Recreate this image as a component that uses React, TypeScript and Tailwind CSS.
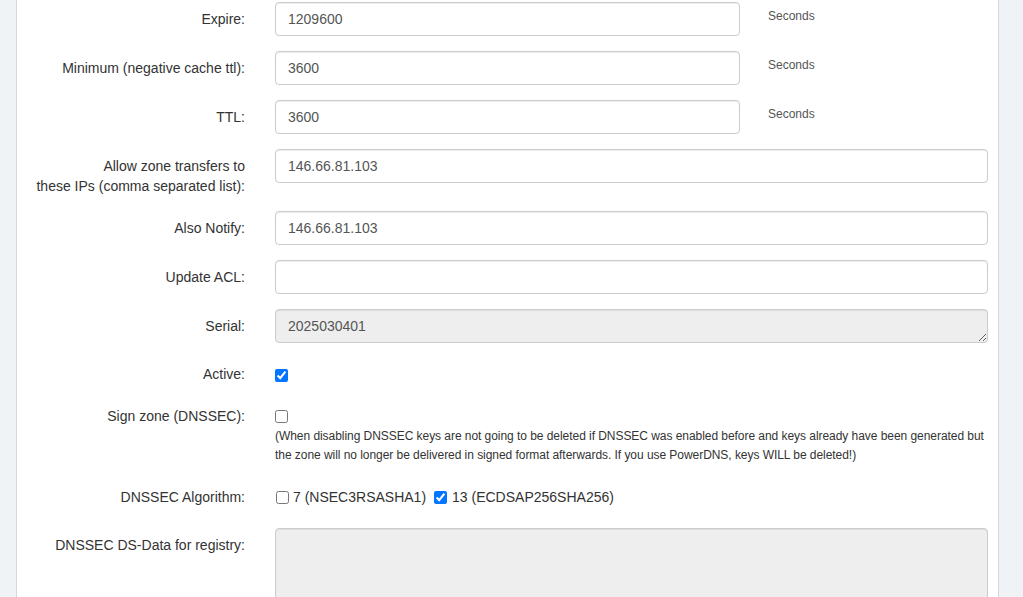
import React from "react";

const font = { fontFamily: '"Liberation Sans", Arial, sans-serif' };

const inputCls =
  "h-[34px] border border-[#ccc] rounded-[4px] bg-white px-3 text-[14px] text-[#555] outline-none shadow-[inset_0_1px_1px_rgba(0,0,0,0.075)]";

function Row({
  label,
  children,
  labelPad = "pt-[7px]",
}: {
  label: React.ReactNode;
  children: React.ReactNode;
  labelPad?: string;
}) {
  return (
    <div className="flex mb-[15px]">
      <label className={`w-[228px] shrink-0 text-right leading-5 text-[14px] text-[#333] ${labelPad}`}>
        {label}
      </label>
      <div className="ml-[30px] flex-1 min-w-0">{children}</div>
    </div>
  );
}

function SecondsRow({ label, value }: { label: string; value: string }) {
  return (
    <Row label={label}>
      <div className="flex">
        <input className={`${inputCls} w-[465px]`} defaultValue={value} />
        <span className="ml-[28px] pt-[4px] leading-5 text-[12px] text-[#555]">Seconds</span>
      </div>
    </Row>
  );
}

export default function App() {
  return (
    <div className="min-h-screen bg-[#eff3f6] pl-4 pr-6 overflow-hidden" style={font}>
      <div className="bg-white border-l border-r border-[#d2d6de] pt-[2px] pr-[10px] h-[597px] overflow-hidden">
        <SecondsRow label="Expire:" value="1209600" />
        <SecondsRow label="Minimum (negative cache ttl):" value="3600" />
        <SecondsRow label="TTL:" value="3600" />

        <Row
          label={
            <>
              Allow zone transfers to
              <br />
              these IPs (comma separated list):
            </>
          }
        >
          <input className={`${inputCls} w-full`} defaultValue="146.66.81.103" />
        </Row>

        <Row label="Also Notify:">
          <input className={`${inputCls} w-full`} defaultValue="146.66.81.103" />
        </Row>

        <Row label="Update ACL:">
          <input className={`${inputCls} w-full`} defaultValue="" />
        </Row>

        <Row label="Serial:">
          <textarea
            readOnly
            rows={1}
            className="block w-full h-[34px] border border-[#ccc] rounded-[4px] bg-[#eee] px-3 py-[6px] leading-5 text-[14px] text-[#555] outline-none shadow-[inset_0_1px_1px_rgba(0,0,0,0.075)]"
            defaultValue="2025030401"
          />
        </Row>

        <Row label="Active:" labelPad="pt-[6px]">
          <div className="h-[26px] pt-[11px] flex">
            <input type="checkbox" defaultChecked className="m-0 w-[13px] h-[13px]" />
          </div>
        </Row>

        <Row label="Sign zone (DNSSEC):" labelPad="pt-[7px]">
          <div className="pt-[11px] flex">
            <input type="checkbox" className="m-0 w-[13px] h-[13px]" />
          </div>
          <p className="mt-[4px] text-[12px] leading-[19px] text-[#333] whitespace-nowrap tracking-[-0.05px]">
            (When disabling DNSSEC keys are not going to be deleted if DNSSEC was enabled before and keys already have been generated but
            <br />
            the zone will no longer be delivered in signed format afterwards. If you use PowerDNS, keys WILL be deleted!)
          </p>
        </Row>

        <Row label="DNSSEC Algorithm:">
          <div className="h-[33px] pt-[7px] flex items-start text-[14px] leading-5 text-[#333]">
            <label className="flex items-center">
              <input type="checkbox" className="m-0 ml-[1px] w-[13px] h-[13px]" />
              <span className="ml-[4px]">7 (NSEC3RSASHA1)</span>
            </label>
            <label className="flex items-center ml-[8px]">
              <input type="checkbox" defaultChecked className="m-0 w-[13px] h-[13px]" />
              <span className="ml-[5px]">13 (ECDSAP256SHA256)</span>
            </label>
          </div>
        </Row>

        <Row label="DNSSEC DS-Data for registry:">
          <textarea
            readOnly
            className="block w-full h-[120px] border border-[#ccc] rounded-[4px] bg-[#eee] px-3 py-[6px] text-[14px] text-[#555] outline-none resize-none shadow-[inset_0_1px_1px_rgba(0,0,0,0.075)]"
            defaultValue=""
          />
        </Row>
      </div>
    </div>
  );
}
